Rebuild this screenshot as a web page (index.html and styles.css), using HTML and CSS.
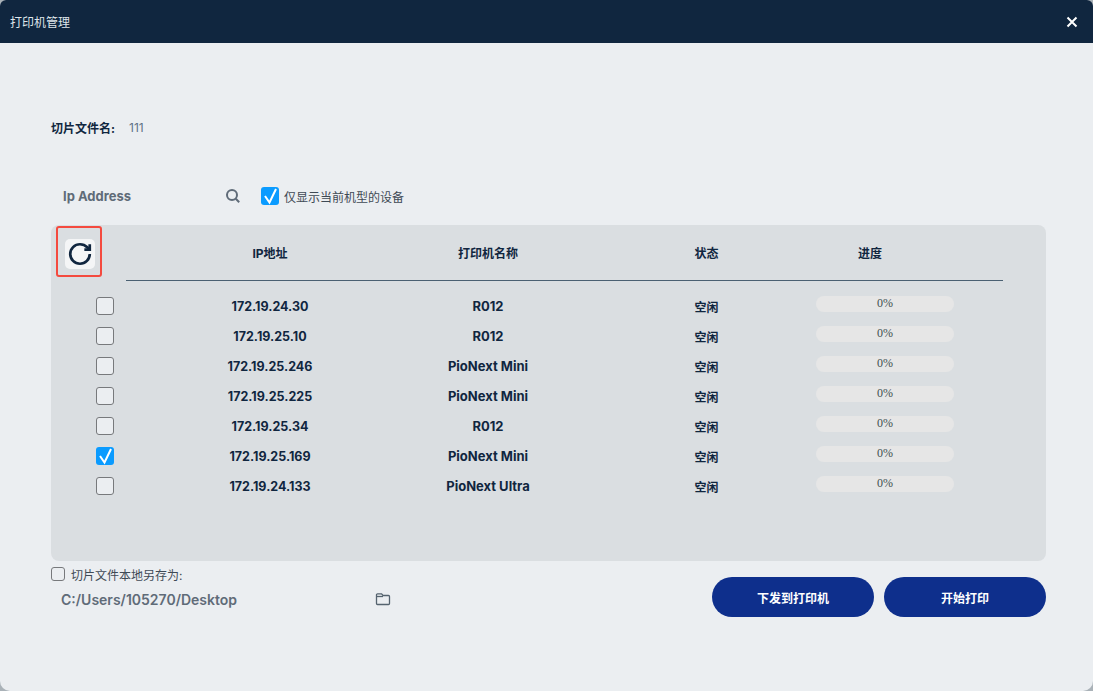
FILE: index.html
```html
<!DOCTYPE html>
<html lang="zh-CN">
<head>
    <meta charset="UTF-8">
    <meta name="viewport" content="width=device-width, initial-scale=1.0">
    <title>打印机管理</title>
    <link rel="stylesheet" href="styles.css">
</head>
<body>
    <div class="window">
        <header class="title-bar">
            <span class="title">打印机管理</span>
            <svg class="close-icon" width="12" height="12" viewBox="0 0 12 12"><path d="M1.5 1.5l9 9M10.5 1.5l-9 9"/></svg>
        </header>

        <main class="content">
            <div class="file-name">
                <span class="file-label">切片文件名:</span>
                <span class="file-value">111</span>
            </div>

            <div class="search-row">
                <span class="search-text">Ip Address</span>
                <svg class="search-icon" width="16" height="16" viewBox="0 0 16 16"><circle cx="7" cy="7" r="5"/><path d="M10.8 10.8l3.4 3.4"/></svg>
                <span class="check checked"><svg viewBox="0 0 18 18"><path d="M4 9l4.500 6.500L15 2"/></svg></span>
                <span class="search-option">仅显示当前机型的设备</span>
            </div>

            <section class="panel">
                <div class="table-head">
                    <div class="refresh-cell">
                        <button class="refresh-button">
                            <svg width="26" height="26" viewBox="0 0 24 24"><path d="M21 12a9 9 0 1 1-9-9c2.52 0 4.93 1 6.74 2.74L21 8"/><path d="M21 3v5h-5"/></svg>
                        </button>
                        <span class="annotation"></span>
                    </div>
                    <span>IP地址</span>
                    <span>打印机名称</span>
                    <span class="status">状态</span>
                    <span class="head-progress">进度</span>
                </div>
                <div class="head-rule"></div>

                <div class="table-row">
                    <span class="check"></span>
                    <span class="ip">172.19.24.30</span>
                    <span>R012</span>
                    <span class="status">空闲</span>
                    <div class="progress">0%</div>
                </div>
                <div class="table-row">
                    <span class="check"></span>
                    <span class="ip">172.19.25.10</span>
                    <span>R012</span>
                    <span class="status">空闲</span>
                    <div class="progress">0%</div>
                </div>
                <div class="table-row">
                    <span class="check"></span>
                    <span class="ip">172.19.25.246</span>
                    <span>PioNext Mini</span>
                    <span class="status">空闲</span>
                    <div class="progress">0%</div>
                </div>
                <div class="table-row">
                    <span class="check"></span>
                    <span class="ip">172.19.25.225</span>
                    <span>PioNext Mini</span>
                    <span class="status">空闲</span>
                    <div class="progress">0%</div>
                </div>
                <div class="table-row">
                    <span class="check"></span>
                    <span class="ip">172.19.25.34</span>
                    <span>R012</span>
                    <span class="status">空闲</span>
                    <div class="progress">0%</div>
                </div>
                <div class="table-row">
                    <span class="check checked"><svg viewBox="0 0 18 18"><path d="M4 9l4.500 6.500L15 2"/></svg></span>
                    <span class="ip">172.19.25.169</span>
                    <span>PioNext Mini</span>
                    <span class="status">空闲</span>
                    <div class="progress">0%</div>
                </div>
                <div class="table-row">
                    <span class="check"></span>
                    <span class="ip">172.19.24.133</span>
                    <span>PioNext Ultra</span>
                    <span class="status">空闲</span>
                    <div class="progress">0%</div>
                </div>
            </section>

            <div class="bottom">
                <div class="save-as">
                    <div class="save-option">
                        <span class="check small"></span>
                        <span>切片文件本地另存为:</span>
                    </div>
                    <div class="save-path">
                        <span class="path-text">C:/Users/105270/Desktop</span>
                        <svg class="folder-icon" width="16" height="14" viewBox="0 0 16 14"><path d="M2.5 12.5h11a1 1 0 0 0 1-1V4.5a1 1 0 0 0-1-1H8L6.6 1.8H2.5a1 1 0 0 0-1 1v8.700a1 1 0 0 0 1 1z"/><path d="M1.500 4.500H8"/></svg>
                    </div>
                </div>
                <div class="actions">
                    <button class="action-button">下发到打印机</button>
                    <button class="action-button">开始打印</button>
                </div>
            </div>
        </main>
    </div>
</body>
</html>
```

FILE: styles.css
```css
* {
    box-sizing: border-box;
}
body {
    margin: 0;
    height: 691px;
    overflow: hidden;
    background-color: #aab2b8;
    font-family: Inter, "Noto Sans CJK SC", sans-serif;
    color: #10263f;
}
.window {
    height: 691px;
    background-color: #ebeef1;
    border-radius: 6px 6px 10px 10px;
    overflow: hidden;
}
.title-bar {
    height: 43px;
    background-color: #10263f;
    display: flex;
    align-items: center;
    justify-content: space-between;
    padding: 0 15px 0 10px;
}
.title {
    font-size: 12px;
    color: #dfe5ea;
}
.close-icon path {
    fill: none;
    stroke: #fff;
    stroke-width: 2;
}
.content {
    padding: 0 47px 0 51px;
}
.file-name {
    display: flex;
    align-items: center;
    gap: 14px;
    height: 20px;
    margin-top: 74px;
    font-size: 12px;
}
.file-label {
    font-weight: 700;
}
.file-value {
    color: #5f7286;
}
.search-row {
    display: flex;
    align-items: center;
    height: 24px;
    margin-top: 47px;
    padding-left: 12px;
}
.search-text {
    width: 162px;
    font-size: 13px;
    font-weight: 700;
    color: #5f6b78;
}
.search-icon {
    margin-right: 20px;
}
.search-icon circle,
.search-icon path {
    fill: none;
    stroke: #5f6b78;
    stroke-width: 2;
}
.search-option {
    margin-left: 5px;
    font-size: 12px;
    color: #3f4a55;
}
.check {
    display: block;
    width: 18px;
    height: 18px;
    border: 1px solid #77797c;
    border-radius: 3px;
    background-color: #ebeef1;
}
.check.small {
    width: 14px;
    height: 14px;
}
.check.checked {
    border: none;
    background-color: #0a9bff;
}
.check svg {
    display: block;
    width: 18px;
    height: 18px;
}
.check svg path {
    fill: none;
    stroke: #fff;
    stroke-width: 2;
}
.panel {
    height: 336px;
    margin-top: 17px;
    background-color: #dadee1;
    border-radius: 8px;
}
.table-head,
.table-row {
    display: grid;
    align-items: center;
    justify-items: center;
    font-size: 13px;
    font-weight: 700;
}
.table-head {
    grid-template-columns: 98px 214px 222px 217px 138px;
    height: 55px;
    padding-left: 14px;
    font-size: 12px;
}
.head-progress {
    margin-right: 30px;
}
.refresh-cell {
    position: relative;
    justify-self: start;
    margin-top: 3px;
}
.refresh-button {
    display: flex;
    align-items: center;
    justify-content: center;
    width: 30px;
    height: 30px;
    padding: 0;
    border: none;
    border-radius: 5px;
    background-color: #f4f5f6;
}
.refresh-button path {
    fill: none;
    stroke: #10263f;
    stroke-width: 2.500;
}
.annotation {
    position: absolute;
    left: -9px;
    top: -13px;
    width: 46px;
    height: 51px;
    border: 2.500px solid #f44a3f;
    border-radius: 3px;
}
.head-rule {
    height: 1px;
    margin: 0 43px 10px 75px;
    background-color: #4a6072;
}
.table-row {
    grid-template-columns: 67px 214px 222px 217px 138px;
    height: 30px;
    padding-left: 45px;
}
.table-row .check {
    justify-self: start;
}
.ip {
    font-size: 12.500px;
}
.status {
    margin-right: 2px;
    font-size: 12px;
}
.progress {
    width: 138px;
    height: 16px;
    margin-bottom: 4px;
    border-radius: 8px;
    background-color: #e6e6e6;
    font-family: "Liberation Serif", serif;
    font-size: 12px;
    font-weight: 400;
    line-height: 14px;
    text-align: center;
    color: #3f5050;
}
.bottom {
    display: flex;
    justify-content: space-between;
    margin-top: 6px;
}
.save-option {
    display: flex;
    align-items: center;
    gap: 6px;
    height: 14px;
    font-size: 12px;
    color: #3f4a55;
}
.save-path {
    display: flex;
    align-items: center;
    justify-content: space-between;
    width: 340px;
    height: 20px;
    margin-top: 8px;
    padding-left: 10px;
}
.path-text {
    font-size: 14px;
    font-weight: 600;
    color: #5f6b78;
}
.folder-icon path {
    fill: none;
    stroke: #55636f;
    stroke-width: 1.300;
}
.actions {
    display: flex;
    gap: 10px;
    margin-top: 10px;
}
.action-button {
    width: 162px;
    height: 40px;
    border: none;
    border-radius: 20px;
    background-color: #0e2f8c;
    color: #fff;
    font-family: inherit;
    font-size: 12px;
    font-weight: 700;
}
```
